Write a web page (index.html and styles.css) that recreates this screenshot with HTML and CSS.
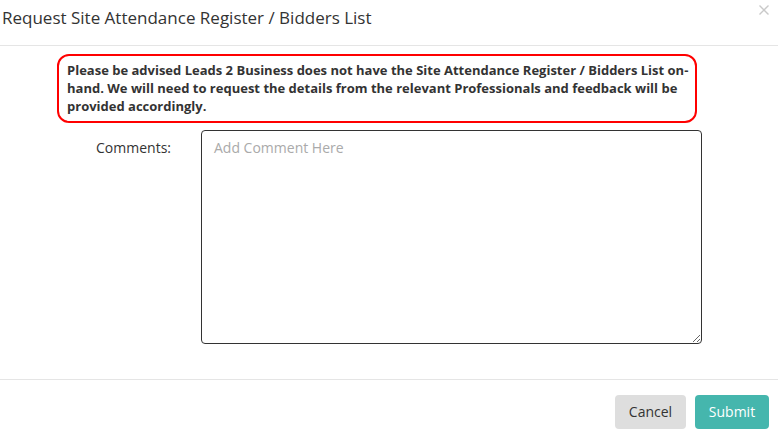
FILE: index.html
```html
<!DOCTYPE html>
<html>
<head>
<meta charset="utf-8">
<link rel="stylesheet" href="styles.css">
</head>
<body>
<div class="modal">
  <div class="modal-header">
    <h4 class="modal-title">Request Site Attendance Register / Bidders List</h4>
    <button class="close" type="button" aria-label="Close">
      <svg width="10" height="10" viewBox="0 0 10 10"><path d="M0.5 0.5L9.5 9.5M9.5 0.5L0.5 9.5" stroke="#c9c9c9" stroke-width="1.4" fill="none"/></svg>
    </button>
  </div>
  <div class="modal-body">
    <div class="notice">Please be advised Leads 2 Business does not have the Site Attendance Register / Bidders List on-hand. We will need to request the details from the relevant Professionals and feedback will be provided accordingly.</div>
    <div class="form-row">
      <label class="form-label" for="comments">Comments:</label>
      <textarea id="comments" class="form-control" placeholder="Add Comment Here"></textarea>
    </div>
  </div>
  <div class="modal-footer">
    <button class="btn btn-cancel" type="button">Cancel</button>
    <button class="btn btn-submit" type="button">Submit</button>
  </div>
</div>
</body>
</html>
```
FILE: styles.css
```css
html, body {
  margin: 0;
  padding: 0;
  background: #fff;
}
body {
  font-family: "Open Sans", "Liberation Sans", sans-serif;
  color: #333;
  font-size: 14px;
}
.modal {
  width: 778px;
}
.modal-header {
  display: flex;
  justify-content: space-between;
  align-items: flex-start;
  height: 46px;
  box-sizing: border-box;
  padding: 5px 9px 0 2px;
  border-bottom: 1px solid #e5e5e5;
}
.modal-title {
  margin: 0;
  font-size: 17px;
  font-weight: 400;
  line-height: 26px;
  color: #333;
}
.close {
  border: 0;
  background: none;
  padding: 0;
  margin-top: 0;
  width: 10px;
  height: 10px;
  display: block;
  cursor: pointer;
}
.close svg {
  display: block;
}
.modal-body {
  padding: 8px 0 0 0;
  height: 334px;
  box-sizing: border-box;
  border-bottom: 1px solid #e5e5e5;
}
.notice {
  margin-left: 57px;
  width: 640px;
  box-sizing: border-box;
  height: 69px;
  border: 2px solid #f00;
  border-radius: 12px;
  padding: 5px 5px 6px 8px;
  font-size: 13px;
  font-weight: 700;
  line-height: 18px;
  color: #333;
}
.form-row {
  display: grid;
  grid-template-columns: 171px 501px;
  column-gap: 30px;
  margin-top: 7px;
}
.form-label {
  text-align: right;
  padding-top: 8px;
  line-height: 20px;
  font-size: 14px;
  color: #333;
}
.form-control {
  width: 501px;
  height: 214px;
  box-sizing: border-box;
  margin: 0;
  border: 1px solid #333;
  border-radius: 4px;
  padding: 7px 12px;
  font-family: "Open Sans", "Liberation Sans", sans-serif;
  font-size: 14px;
  line-height: 20px;
  color: #555;
  resize: both;
}
.form-control::placeholder {
  color: #aaa;
}
.modal-footer {
  display: flex;
  justify-content: flex-end;
  gap: 9px;
  padding: 15px 9px 0 0;
}
.btn {
  height: 34px;
  box-sizing: border-box;
  border: 0;
  border-radius: 4px;
  padding: 0 12px;
  font-family: "Open Sans", "Liberation Sans", sans-serif;
  font-size: 14px;
  line-height: 34px;
  cursor: pointer;
}
.btn-cancel {
  width: 71px;
  background: #dedede;
  color: #333;
}
.btn-submit {
  width: 74px;
  background: #45b6ad;
  color: #fff;
}
```
